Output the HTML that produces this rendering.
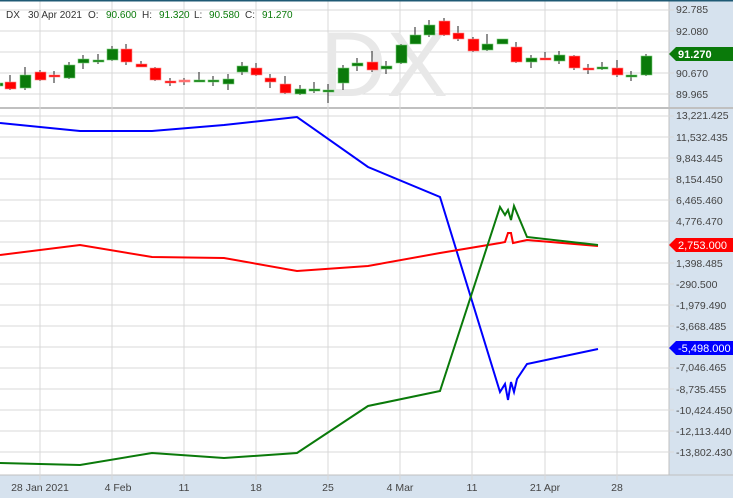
<!DOCTYPE html>
<html><head><style>
body{margin:0;width:733px;height:498px;overflow:hidden;background:#fff;font-family:"Liberation Sans",sans-serif;}
</style></head><body>
<svg width="733" height="498" xmlns="http://www.w3.org/2000/svg" font-family="Liberation Sans, sans-serif" font-size="11">
<rect x="0" y="0" width="733" height="498" fill="#fff"/>
<rect x="669" y="0" width="64" height="498" fill="#d6e2ee"/>
<rect x="0" y="475" width="733" height="23" fill="#d6e2ee"/>
<line x1="0" y1="108" x2="733" y2="108" stroke="#c0c0c0" stroke-width="2"/>
<line x1="669" y1="0" x2="669" y2="475" stroke="#c0c0c0"/>
<line x1="0" y1="475" x2="733" y2="475" stroke="#c0c0c0"/>
<g stroke="#d8d8d8" stroke-width="1">
<line x1="40" y1="0" x2="40" y2="480"/><line x1="112" y1="0" x2="112" y2="480"/><line x1="184" y1="0" x2="184" y2="480"/><line x1="256" y1="0" x2="256" y2="480"/><line x1="328" y1="0" x2="328" y2="480"/><line x1="400" y1="0" x2="400" y2="480"/><line x1="472" y1="0" x2="472" y2="480"/><line x1="545" y1="0" x2="545" y2="480"/><line x1="617" y1="0" x2="617" y2="480"/>
<line x1="0" y1="10" x2="674" y2="10"/><line x1="0" y1="31" x2="674" y2="31"/><line x1="0" y1="52" x2="674" y2="52"/><line x1="0" y1="73" x2="674" y2="73"/><line x1="0" y1="94" x2="674" y2="94"/>
<line x1="0" y1="116" x2="674" y2="116"/><line x1="0" y1="137" x2="674" y2="137"/><line x1="0" y1="158" x2="674" y2="158"/><line x1="0" y1="179" x2="674" y2="179"/><line x1="0" y1="200" x2="674" y2="200"/><line x1="0" y1="221" x2="674" y2="221"/><line x1="0" y1="242" x2="674" y2="242"/><line x1="0" y1="263" x2="674" y2="263"/><line x1="0" y1="284" x2="674" y2="284"/><line x1="0" y1="305" x2="674" y2="305"/><line x1="0" y1="326" x2="674" y2="326"/><line x1="0" y1="347" x2="674" y2="347"/><line x1="0" y1="368" x2="674" y2="368"/><line x1="0" y1="389" x2="674" y2="389"/><line x1="0" y1="410" x2="674" y2="410"/><line x1="0" y1="431" x2="674" y2="431"/><line x1="0" y1="452" x2="674" y2="452"/>
</g>
<text x="320" y="96" font-size="92" fill="#e8e8e8">DX</text>
<rect x="0" y="0" width="733" height="1.5" fill="#1f5a74"/>
<g font-size="10" fill="#333">
<text x="6" y="18">DX</text><text x="28" y="18">30 Apr 2021</text><text x="88" y="18">O:</text><text x="106" y="18" fill="#0a7a0a">90.600</text><text x="142" y="18">H:</text><text x="159" y="18" fill="#0a7a0a">91.320</text><text x="194" y="18">L:</text><text x="209" y="18" fill="#0a7a0a">90.580</text><text x="245" y="18">C:</text><text x="262" y="18" fill="#0a7a0a">91.270</text>
</g>
<g fill="#444" font-size="10.5">
<text x="676" y="13">92.785</text><text x="676" y="35">92.080</text><text x="676" y="77">90.670</text><text x="676" y="98">89.965</text>
<text x="676" y="119">13,221.425</text><text x="676" y="141">11,532.435</text><text x="676" y="162">9,843.445</text><text x="676" y="183">8,154.450</text><text x="676" y="204">6,465.460</text><text x="676" y="225">4,776.470</text><text x="676" y="267">1,398.485</text><text x="676" y="288">-290.500</text><text x="676" y="309">-1,979.490</text><text x="676" y="330">-3,668.485</text><text x="676" y="371">-7,046.465</text><text x="676" y="393">-8,735.455</text><text x="676" y="414">-10,424.450</text><text x="676" y="435">-12,113.440</text><text x="676" y="456">-13,802.430</text>
</g>
<g fill="#444" font-size="10.5" text-anchor="middle">
<text x="40" y="491">28 Jan 2021</text><text x="118" y="491">4 Feb</text><text x="184" y="491">11</text><text x="256" y="491">18</text><text x="328" y="491">25</text><text x="400" y="491">4 Mar</text><text x="472" y="491">11</text><text x="545" y="491">21 Apr</text><text x="617" y="491">28</text>
</g>
<polygon points="669,54 676,47 733,47 733,61 676,61" fill="#0a7a0a"/>
<text x="678" y="58" fill="#fff" font-weight="bold" font-size="11">91.270</text>
<polygon points="669,245 676,238 733,238 733,252 676,252" fill="#f00"/>
<text x="678" y="249" fill="#fff" font-size="11">2,753.000</text>
<polygon points="669,348 676,341 733,341 733,355 676,355" fill="#00f"/>
<text x="678" y="352" fill="#fff" font-size="11">-5,498.000</text>
<polyline fill="none" stroke="#00f" stroke-width="2" points="0,123 80,131 152,131 224,125 297,117 368,167 440,197 500,392 505,384 508,400 511,382 514,392 517,379 527,364 598,349"/>
<polyline fill="none" stroke="#f00" stroke-width="2" points="0,255 80,245 152,257 224,258 297,271 368,266 440,253 500,243 505,242 508,233 511,233 513,243 527,240 598,246"/>
<polyline fill="none" stroke="#0a7a0a" stroke-width="2" points="0,463 80,465 152,453 224,458 297,453 368,406 440,391 500,207 505,215 508,210 511,220 514,206 527,237 598,245"/>
<g stroke="#222" stroke-width="1">
<line x1="10" y1="75" x2="10" y2="90"/><line x1="25" y1="67" x2="25" y2="90"/><line x1="40" y1="70" x2="40" y2="81"/><line x1="54" y1="71" x2="54" y2="83"/><line x1="69" y1="62" x2="69" y2="79"/><line x1="83" y1="55" x2="83" y2="69"/><line x1="98" y1="54" x2="98" y2="64"/><line x1="112" y1="46" x2="112" y2="61"/><line x1="126" y1="44" x2="126" y2="65"/><line x1="141" y1="61" x2="141" y2="67"/><line x1="155" y1="67" x2="155" y2="81"/><line x1="170" y1="78" x2="170" y2="86"/><line x1="184" y1="78" x2="184" y2="85"/><line x1="199" y1="72" x2="199" y2="82"/><line x1="213" y1="76" x2="213" y2="86"/><line x1="228" y1="74" x2="228" y2="90"/><line x1="242" y1="62" x2="242" y2="75"/><line x1="256" y1="63" x2="256" y2="76"/><line x1="270" y1="74" x2="270" y2="88"/><line x1="285" y1="76" x2="285" y2="94"/><line x1="300" y1="85" x2="300" y2="95"/><line x1="314" y1="82" x2="314" y2="93"/><line x1="328" y1="84" x2="328" y2="103"/><line x1="343" y1="65" x2="343" y2="90"/><line x1="357" y1="58" x2="357" y2="71"/><line x1="372" y1="51" x2="372" y2="72"/><line x1="386" y1="61" x2="386" y2="74"/><line x1="401" y1="44" x2="401" y2="64"/><line x1="415" y1="27" x2="415" y2="44"/><line x1="429" y1="20" x2="429" y2="37"/><line x1="444" y1="18" x2="444" y2="36"/><line x1="458" y1="26" x2="458" y2="41"/><line x1="473" y1="37" x2="473" y2="52"/><line x1="487" y1="34" x2="487" y2="51"/><line x1="502" y1="39" x2="502" y2="44"/><line x1="516" y1="42" x2="516" y2="63"/><line x1="531" y1="55" x2="531" y2="68"/><line x1="545" y1="52" x2="545" y2="60"/><line x1="559" y1="51" x2="559" y2="64"/><line x1="574" y1="55" x2="574" y2="70"/><line x1="588" y1="64" x2="588" y2="74"/><line x1="602" y1="62" x2="602" y2="70"/><line x1="617" y1="60" x2="617" y2="77"/><line x1="631" y1="71" x2="631" y2="81"/><line x1="646" y1="54" x2="646" y2="76"/>
</g>
<g fill="#f00" stroke="#f88" stroke-width="0.6">
<rect x="5" y="82" width="11" height="7"/><rect x="35" y="72" width="11" height="8"/><rect x="49" y="75" width="11" height="2"/><rect x="121" y="49" width="11" height="13"/><rect x="136" y="64" width="11" height="3"/><rect x="150" y="68" width="11" height="12"/><rect x="165" y="81" width="11" height="2"/><rect x="179" y="80" width="11" height="2" fill="#f66"/><rect x="251" y="68" width="11" height="7"/><rect x="265" y="78" width="11" height="4"/><rect x="280" y="84" width="11" height="9"/><rect x="367" y="62" width="11" height="8"/><rect x="439" y="21" width="11" height="14"/><rect x="453" y="33" width="11" height="6"/><rect x="468" y="39" width="11" height="12"/><rect x="511" y="47" width="11" height="15"/><rect x="540" y="58" width="11" height="2"/><rect x="569" y="56" width="11" height="12"/><rect x="583" y="68" width="11" height="2"/><rect x="612" y="68" width="11" height="7"/>
</g>
<g fill="#0a7a0a" stroke="#7c7" stroke-width="0.6">
<rect x="0" y="83" width="3" height="3"/><rect x="20" y="75" width="11" height="13"/><rect x="64" y="65" width="11" height="13"/><rect x="78" y="59" width="11" height="4"/><rect x="93" y="60" width="11" height="2"/><rect x="107" y="49" width="11" height="11"/><rect x="194" y="80" width="11" height="2"/><rect x="208" y="80" width="11" height="2"/><rect x="223" y="79" width="11" height="5"/><rect x="237" y="66" width="11" height="6"/><rect x="295" y="89" width="11" height="5"/><rect x="309" y="89" width="11" height="2"/><rect x="323" y="90" width="11" height="2"/><rect x="338" y="68" width="11" height="15"/><rect x="352" y="63" width="11" height="3"/><rect x="381" y="66" width="11" height="3"/><rect x="396" y="45" width="11" height="18"/><rect x="410" y="35" width="11" height="9"/><rect x="424" y="25" width="11" height="10"/><rect x="482" y="44" width="11" height="6"/><rect x="497" y="39" width="11" height="5"/><rect x="526" y="58" width="11" height="4"/><rect x="554" y="55" width="11" height="6"/><rect x="597" y="67" width="11" height="2"/><rect x="626" y="75" width="11" height="2"/><rect x="641" y="56" width="11" height="19"/>
</g>
</svg>
</body></html>
